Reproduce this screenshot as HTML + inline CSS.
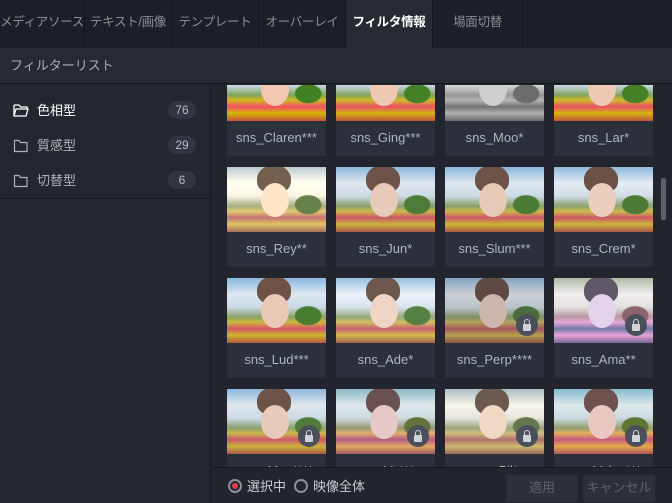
<!DOCTYPE html>
<html><head><meta charset="utf-8"><style>
*{margin:0;padding:0;box-sizing:border-box}
body{width:672px;height:503px;overflow:hidden;background:#22252d;font-family:"Liberation Sans","Noto Sans CJK JP",sans-serif;position:relative}
.tabs{position:absolute;left:0;top:0;width:672px;height:48px;background:#1c1f26}
.tab{position:absolute;top:0;height:48px;width:86px;border-right:1px solid #14161b;color:#8a8e96;font-size:12.5px;letter-spacing:-0.3px;text-align:center;line-height:44px;white-space:nowrap;overflow:hidden}
.tab.act{background:#262a33;color:#fff;font-weight:bold}
.hdr{position:absolute;left:0;top:48px;width:672px;height:36px;background:#262a33;border-bottom:1px solid #16181d;color:#a9adb5;font-size:13px;line-height:35px;padding-left:10px}
.side{position:absolute;left:0;top:85px;width:211px;height:418px;background:#242730;border-right:1px solid #16181d}
.row{position:absolute;left:0;width:211px;height:35px;color:#aeb2ba;font-size:13px;line-height:35px}
.row .nm{position:absolute;left:37px}
.row .ct{position:absolute;left:168px;top:8px;width:28px;height:18px;border-radius:9px;background:#31353f;color:#b9bdc5;font-size:12px;line-height:18px;text-align:center}
.row svg{position:absolute;left:13px;top:11px}
.sep{position:absolute;left:0;top:113px;width:211px;height:1px;background:#16181d}
.grid{position:absolute;left:212px;top:85px;width:460px;height:382px;overflow:hidden;background:#22252d}
.card{position:absolute;width:99px;height:100px;background:#2c303a}
.img{position:absolute;left:0;top:0;width:99px;height:65px;overflow:hidden;
background:radial-gradient(ellipse 14px 10px at 82% 58%,#4f7a3a 90%,transparent 100%),
linear-gradient(180deg,#8db6d8 0%,#dfe7ee 25%,#cdd9e3 45%,#8aa070 60%,#c9b850 68%,#c85a6a 78%,#c9b440 88%,#a85a4a 100%)}
.face{position:absolute;left:34px;top:16px;width:28px;height:34px;border-radius:50%;background:#e6cabb}
.hair{position:absolute;left:30px;top:-2px;width:34px;height:28px;border-radius:50% 50% 40% 40%;background:#6b5248}
.lbl{position:absolute;top:65px;width:99px;height:35px;color:#a9b6c8;font-size:13px;text-align:center;line-height:34px}
.lock{position:absolute;left:71px;top:36px;width:22px;height:22px;border-radius:50%;background:#4a4f5c}
.lock:before{content:"";position:absolute;left:7px;top:10px;width:8px;height:7px;background:#d0d3d8;border-radius:1px}
.lock:after{content:"";position:absolute;left:8px;top:5px;width:4px;height:5px;border:1.5px solid #d0d3d8;border-bottom:none;border-radius:3px 3px 0 0}
.scroll{position:absolute;left:661px;top:178px;width:5px;height:42px;background:#5c616c;border-radius:2px}
.bot{position:absolute;left:212px;top:467px;width:460px;height:36px;background:#22252d;border-top:1px solid #16181d}
.radio{position:absolute;top:11px;width:14px;height:14px;border-radius:50%;border:2px solid #8c9099}
.btn{position:absolute;top:7px;height:27px;background:#2c3039;color:#5e636d;font-size:13px;text-align:center;line-height:26px;border-radius:2px}
.bt{position:absolute;top:8px;color:#c9ccd2;font-size:13px}
</style></head><body>
<div class="tabs">
<div class="tab" style="left:0;width:85px">メディアソース</div>
<div class="tab" style="left:85px;width:87px">テキスト/画像</div>
<div class="tab" style="left:172px;width:87px">テンプレート</div>
<div class="tab" style="left:259px;width:87px">オーバーレイ</div>
<div class="tab act" style="left:346px;width:87px">フィルタ情報</div>
<div class="tab" style="left:433px;width:90px">場面切替</div>
</div>
<div class="hdr">フィルターリスト</div>
<div class="side">
<div class="row" style="top:8px;color:#fff"><svg width="16" height="14" viewBox="0 0 16 14"><path d="M1 1h5l1.5 2H14v2M1 1v11h12l2-7H3L1 12" fill="none" stroke="#fff" stroke-width="1.3"/></svg><span class="nm">色相型</span><span class="ct">76</span></div>
<div class="row" style="top:43px"><svg width="16" height="14" viewBox="0 0 16 14"><path d="M1.5 1.5h4.5l1.5 2h6.5v9h-12.5z" fill="none" stroke="#aeb2ba" stroke-width="1.2"/></svg><span class="nm">質感型</span><span class="ct">29</span></div>
<div class="row" style="top:78px"><svg width="16" height="14" viewBox="0 0 16 14"><path d="M1.5 1.5h4.5l1.5 2h6.5v9h-12.5z" fill="none" stroke="#aeb2ba" stroke-width="1.2"/></svg><span class="nm">切替型</span><span class="ct">6</span></div>
<div class="sep"></div>
</div>
<div class="grid" id="g"></div>
<div class="scroll"></div>
<div class="bot">
<div class="radio" style="left:16px"><div style="position:absolute;left:2px;top:2px;width:6px;height:6px;border-radius:50%;background:#e03a4a"></div></div>
<div class="bt" style="left:35px">選択中</div>
<div class="radio" style="left:82px"></div>
<div class="bt" style="left:101px">映像全体</div>
<div class="btn" style="left:294px;width:72px">適用</div>
<div class="btn" style="left:371px;width:72px">キャンセル</div>
</div>
<script>
var names=[["sns_Claren***","sns_Ging***","sns_Moo*","sns_Lar*"],["sns_Rey**","sns_Jun*","sns_Slum***","sns_Crem*"],["sns_Lud***","sns_Ade*","sns_Perp****","sns_Ama**"],["sns_Mon****","sns_Vo***","sns_Pil*","sns_Valen***"]];
var locks=[[0,0,0,0],[0,0,0,0],[0,0,1,1],[1,1,1,1]];
var filt=[["saturate(1.5)","saturate(1.4)","grayscale(1)","saturate(1.4)"],["sepia(.35) brightness(1.05)","saturate(1.05)","saturate(1.1)","contrast(1.05)"],["saturate(1.2)","brightness(1.05) saturate(.9)","saturate(.85) brightness(.9)","sepia(.2) hue-rotate(250deg) saturate(.6)"],["saturate(1.05)","hue-rotate(-20deg) saturate(.8)","sepia(.3) saturate(.8)","hue-rotate(-15deg)"]];
var h="";
for(var r=0;r<4;r++)for(var c=0;c<4;c++){
var x=15+c*109,y=-29+r*111;
h+='<div class="card" style="left:'+x+'px;top:'+y+'px"><div class="img" style="filter:'+filt[r][c]+'"><div class="hair"></div><div class="face"></div></div>'+(locks[r][c]?'<div class="lock"></div>':'')+'<div class="lbl">'+names[r][c]+'</div></div>';}
document.getElementById('g').innerHTML=h;
</script>
</body></html>
